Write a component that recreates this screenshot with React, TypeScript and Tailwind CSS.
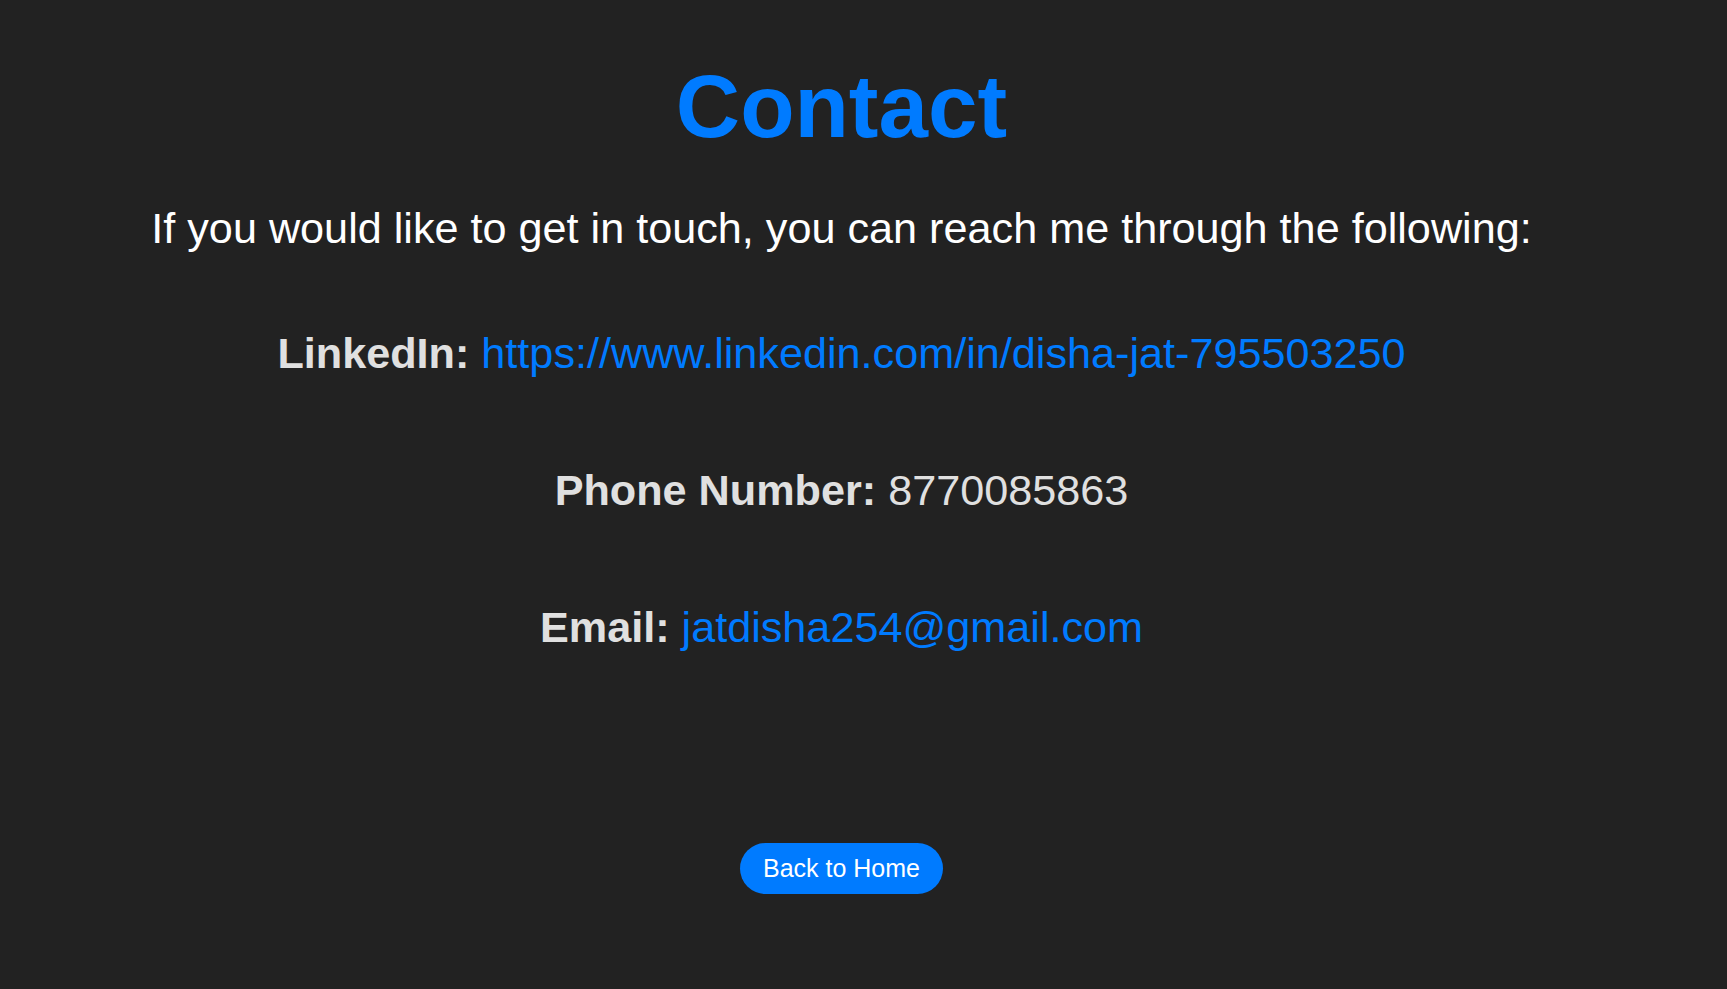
import React from "react";

export default function App() {
  return (
    <div
      className="min-h-[989px] w-full bg-[#222222]"
      style={{ fontFamily: '"Liberation Sans", Arial, sans-serif' }}
    >
      <div className="flex w-[1683px] flex-col items-center text-center">
        <h1 className="mt-[55px] text-[89px] font-bold leading-[102px] text-[#007bff]">
          Contact
        </h1>
        <p className="mt-[47px] text-[43.2px] leading-[49px] text-white">
          If you would like to get in touch, you can reach me through the following:
        </p>
        <p className="mt-[76px] text-[43.2px] leading-[49px] text-[#e0e0e0]">
          <span className="font-bold">LinkedIn:</span>{" "}
          <a className="text-[#007bff]" href="#">
            https://www.linkedin.com/in/disha-jat-795503250
          </a>
        </p>
        <p className="mt-[88px] text-[43.2px] leading-[49px] text-[#e0e0e0]">
          <span className="font-bold">Phone Number:</span> 8770085863
        </p>
        <p className="mt-[88px] text-[43.2px] leading-[49px] text-[#e0e0e0]">
          <span className="font-bold">Email:</span>{" "}
          <a className="text-[#007bff]" href="#">
            jatdisha254@gmail.com
          </a>
        </p>
        <button className="mt-[191px] flex h-[51px] w-[203px] items-center justify-center rounded-full bg-[#007bff] text-[25px] text-white">
          Back to Home
        </button>
      </div>
    </div>
  );
}
